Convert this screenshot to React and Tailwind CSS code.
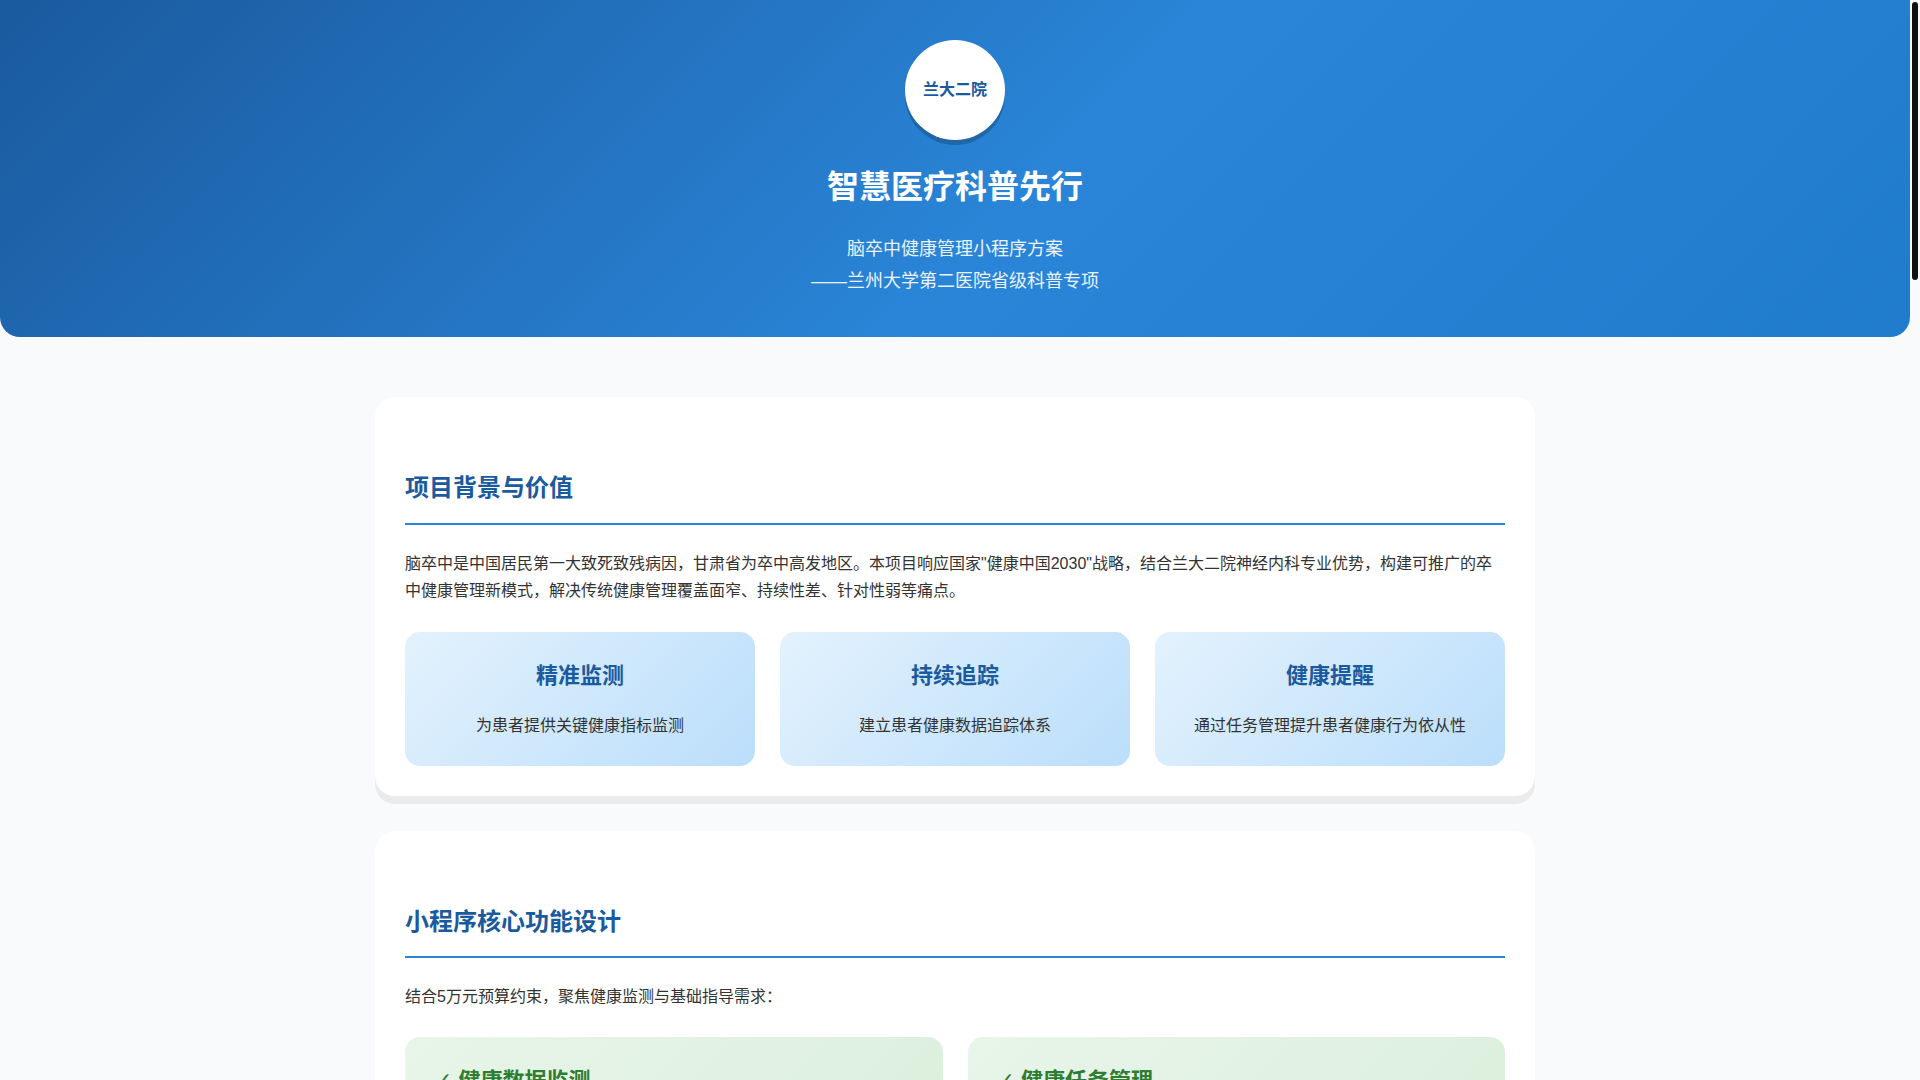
const features = [
  { title: "精准监测", desc: "为患者提供关键健康指标监测" },
  { title: "持续追踪", desc: "建立患者健康数据追踪体系" },
  { title: "健康提醒", desc: "通过任务管理提升患者健康行为依从性" },
]

function SectionTitle({ children }) {
  return (
    <h2 className="mt-[41px] mb-[25px] border-b-2 border-[#2a85d8] pb-[14px] text-[24px] leading-[40.8px] font-bold text-[#1a5a9e]">
      {children}
    </h2>
  )
}

function Card({ children, className = "" }) {
  return (
    <section className={`rounded-[20px] bg-white p-[30px] shadow-[0_8px_0_rgba(0,0,0,0.06)] ${className}`}>
      {children}
    </section>
  )
}

export default function App() {
  return (
    <div className="flex h-screen overflow-hidden bg-[#f8fafc] font-['Liberation_Sans','Noto_Sans_CJK_SC',sans-serif] text-[#333333]">
      <div className="min-w-0 flex-1">
        {/* 顶部 */}
        <header className="flex h-[337px] flex-col items-center rounded-b-[20px] bg-[linear-gradient(135deg,#1a5a9e,#2a85d8_55%,#1f7bcc)] pt-[40px] text-white">
          <div className="flex h-[100px] w-[100px] items-center justify-center rounded-full bg-white text-[16px] font-bold text-[#1a5a9e] shadow-[0_5px_0_rgba(0,0,0,0.2)]">
            兰大二院
          </div>
          <h1 className="mt-[20px] text-[32px] leading-[54px] font-bold">智慧医疗科普先行</h1>
          <p className="mt-[19px] text-center text-[18px] leading-[32px] text-white/90">
            脑卒中健康管理小程序方案
            <br />
            ——兰州大学第二医院省级科普专项
          </p>
        </header>

        <main className="mx-auto mt-[60px] w-[1160px]">
          <Card>
            <SectionTitle>项目背景与价值</SectionTitle>
            <p className="text-[16px] leading-[27.6px]">
              脑卒中是中国居民第一大致死致残病因，甘肃省为卒中高发地区。本项目响应国家"健康中国2030"战略，结合兰大二院神经内科专业优势，构建可推广的卒中健康管理新模式，解决传统健康管理覆盖面窄、持续性差、针对性弱等痛点。
            </p>
            <div className="mt-[26.6px] grid grid-cols-3 gap-[25px]">
              {features.map((f) => (
                <div
                  key={f.title}
                  className="h-[134px] rounded-[15px] bg-[linear-gradient(135deg,#e3f2fd,#bbdefb)] pt-[25px] text-center"
                >
                  <h3 className="text-[22px] leading-[37.4px] font-bold text-[#1a5a9e]">{f.title}</h3>
                  <p className="mt-[18px] text-[16px] leading-[27.2px]">{f.desc}</p>
                </div>
              ))}
            </div>
          </Card>

          <Card className="mt-[35px]">
            <SectionTitle>小程序核心功能设计</SectionTitle>
            <p className="text-[16px] leading-[27.2px]">结合5万元预算约束，聚焦健康监测与基础指导需求：</p>
            <div className="mt-[26.4px] grid grid-cols-2 gap-[25px]">
              {["健康数据监测", "健康任务管理"].map((t) => (
                <div
                  key={t}
                  className="h-[1100px] rounded-[15px] bg-[linear-gradient(135deg,#e8f5e9,#c8e6c9)] pt-[25px] pl-[29px]"
                >
                  <h3 className="text-[22px] leading-[37.4px] font-bold text-[#2e7d32]">
                    <span className="font-['DejaVu_Sans']">✓</span> {t}
                  </h3>
                </div>
              ))}
            </div>
          </Card>
        </main>
      </div>

      {/* 滚动条 */}
      <aside className="w-[10px] shrink-0 pt-[2px] pl-[2px]">
        <div className="h-[278px] w-[6px] rounded-[3px] bg-[#111111]" />
      </aside>
    </div>
  )
}
